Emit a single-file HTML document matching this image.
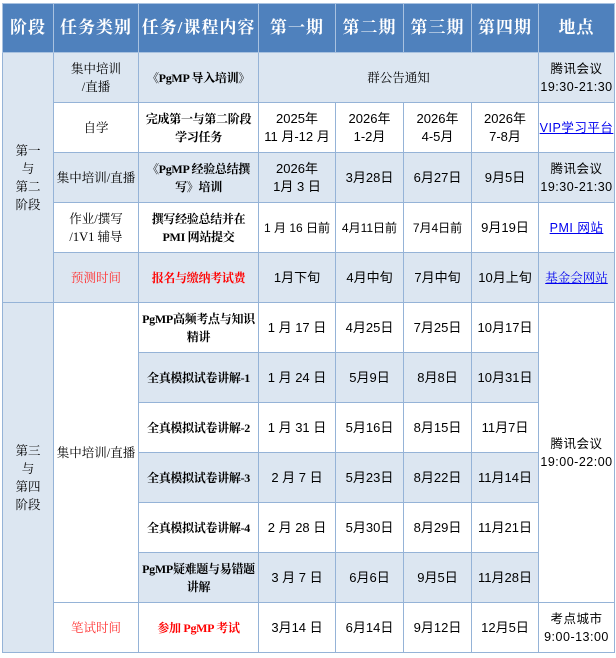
<!DOCTYPE html>
<html><head><meta charset="utf-8"><style>
body{margin:0;background:#fff;}
table{position:absolute;left:2px;top:3px;border-collapse:collapse;table-layout:fixed;width:612px;
font-family:"Liberation Serif","Noto Serif CJK SC",serif;font-size:12.5px;color:#000;}
td{border:1.5px solid #95b3d7;text-align:center;vertical-align:middle;padding:0;line-height:18px;overflow:hidden;white-space:nowrap;height:49px;}
tr.h td{background:#4f81bd;color:#fff;font-weight:bold;font-size:17px;letter-spacing:1px;border-color:#a9c2e0;height:48px;}
.b{background:#dce6f1;}
.w{background:#fff;}
.bd{font-weight:bold;font-size:12px;letter-spacing:-0.3px;}
.red{color:#ff0000;}
.pk{color:#ff3333;}
.d{font-family:"Liberation Sans","Noto Sans CJK SC",sans-serif;font-size:13px;}
a{color:#0000ee;text-decoration:underline;}
.m{font-family:"Liberation Sans","Noto Sans CJK SC",sans-serif;font-size:12.5px;letter-spacing:0.5px;}
</style></head><body>
<table>
<colgroup><col style="width:51px"><col style="width:85px"><col style="width:120px"><col style="width:77px"><col style="width:68px"><col style="width:68px"><col style="width:67px"><col style="width:76px"></colgroup>
<tr class="h"><td>阶段</td><td>任务类别</td><td>任务/课程内容</td><td>第一期</td><td>第二期</td><td>第三期</td><td>第四期</td><td>地点</td></tr>
<tr class="b"><td rowspan="5" class="b">第一<br>与<br>第二<br>阶段</td><td>集中培训<br>/直播</td><td class="bd">《PgMP 导入培训》</td><td colspan="4">群公告通知</td><td class="m">腾讯会议<br>19:30-21:30</td></tr>
<tr class="w"><td>自学</td><td class="bd">完成第一与第二阶段<br>学习任务</td><td class="d">2025年<br>11 月-12 月</td><td class="d">2026年<br>1-2月</td><td class="d">2026年<br>4-5月</td><td class="d">2026年<br>7-8月</td><td class="m"><a>VIP学习平台</a></td></tr>
<tr class="b"><td>集中培训/直播</td><td class="bd">《PgMP 经验总结撰<br>写》培训</td><td class="d">2026年<br>1月 3 日</td><td class="d">3月28日</td><td class="d">6月27日</td><td class="d">9月5日</td><td class="m">腾讯会议<br>19:30-21:30</td></tr>
<tr class="w"><td>作业/撰写<br>/1V1 辅导</td><td class="bd">撰写经验总结并在<br>PMI 网站提交</td><td class="d" style="font-size:12px">1 月 16 日前</td><td class="d" style="font-size:12px">4月11日前</td><td class="d" style="font-size:12px">7月4日前</td><td class="d">9月19日</td><td class="m"><a>PMI 网站</a></td></tr>
<tr class="b"><td class="pk">预测时间</td><td class="bd red">报名与缴纳考试费</td><td class="d">1月下旬</td><td class="d">4月中旬</td><td class="d">7月中旬</td><td class="d">10月上旬</td><td><a>基金会网站</a></td></tr>
<tr class="w"><td rowspan="7" class="b">第三<br>与<br>第四<br>阶段</td><td rowspan="6" class="w">集中培训/直播</td><td class="bd">PgMP高频考点与知识<br>精讲</td><td class="d">1 月 17 日</td><td class="d">4月25日</td><td class="d">7月25日</td><td class="d">10月17日</td><td rowspan="6" class="w m">腾讯会议<br>19:00-22:00</td></tr>
<tr class="b"><td class="bd">全真模拟试卷讲解-1</td><td class="d">1 月 24 日</td><td class="d">5月9日</td><td class="d">8月8日</td><td class="d">10月31日</td></tr>
<tr class="w"><td class="bd">全真模拟试卷讲解-2</td><td class="d">1 月 31 日</td><td class="d">5月16日</td><td class="d">8月15日</td><td class="d">11月7日</td></tr>
<tr class="b"><td class="bd">全真模拟试卷讲解-3</td><td class="d">2 月 7 日</td><td class="d">5月23日</td><td class="d">8月22日</td><td class="d">11月14日</td></tr>
<tr class="w"><td class="bd">全真模拟试卷讲解-4</td><td class="d">2 月 28 日</td><td class="d">5月30日</td><td class="d">8月29日</td><td class="d">11月21日</td></tr>
<tr class="b"><td class="bd">PgMP疑难题与易错题<br>讲解</td><td class="d">3 月 7 日</td><td class="d">6月6日</td><td class="d">9月5日</td><td class="d">11月28日</td></tr>
<tr class="w"><td class="pk">笔试时间</td><td class="bd red">参加 PgMP 考试</td><td class="d">3月14 日</td><td class="d">6月14日</td><td class="d">9月12日</td><td class="d">12月5日</td><td class="m">考点城市<br>9:00-13:00</td></tr>
</table>
</body></html>
